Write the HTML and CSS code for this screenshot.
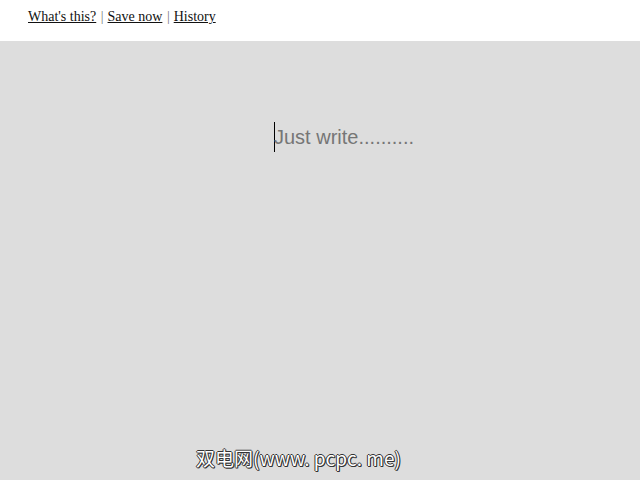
FILE: index.html
```html
<!DOCTYPE html>
<html>
<head>
<meta charset="utf-8">
<link rel="stylesheet" href="styles.css">
</head>
<body>
<header class="topbar">
  <a href="#" class="link">What's this?</a><span class="sep">|</span><a href="#" class="link">Save now</a><span class="sep">|</span><a href="#" class="link">History</a>
</header>
<main class="stage">
  <div class="editor">
    <span class="caret"></span><span class="placeholder">Just write..........</span>
  </div>
</main>
<div class="watermark">双电网(www. pcpc. me)</div>
</body>
</html>
```

FILE: styles.css
```css
html, body {
  margin: 0;
  padding: 0;
  height: 100%;
}
body {
  background: #dddddd;
  display: flex;
  flex-direction: column;
  overflow: hidden;
}
.topbar {
  background: #ffffff;
  height: 41px;
  box-sizing: border-box;
  padding: 7px 0 0 28px;
  font-family: "Liberation Serif", "Times New Roman", serif;
  font-size: 14px;
  line-height: 20px;
  color: #111;
}
.link {
  color: #111;
  text-decoration: underline;
}
.sep {
  color: #777;
  margin: 0 4px 0 4.5px;
}
.stage {
  flex: 1;
  padding: 81px 0 0 274px;
}
.editor {
  display: flex;
  align-items: center;
  height: 30px;
}
.caret {
  width: 1px;
  height: 30px;
  background: #000;
}
.placeholder {
  font-family: "Liberation Sans", Arial, sans-serif;
  font-size: 20px;
  color: #767676;
  margin-left: -1px;
}
.watermark {
  position: absolute;
  left: 196px;
  top: 444px;
  font-family: "Noto Sans CJK SC", "Liberation Sans", sans-serif;
  font-size: 19px;
  color: #ffffff;
  text-shadow: 1px 0 0 #333, -1px 0 0 #333, 0 1px 0 #333, 0 -1px 0 #333, 1px 1px 0 #333;
}
```
